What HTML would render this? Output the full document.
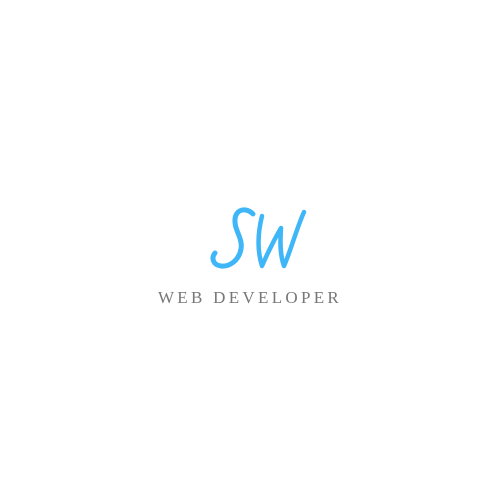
<!DOCTYPE html>
<html><head><style>
html,body{margin:0;padding:0;width:500px;height:500px;background:#fff;overflow:hidden}
.t{position:absolute;left:0;width:500px;top:288px;text-align:center;font-family:"Liberation Serif",serif;font-size:17px;letter-spacing:3.3px;color:#777;padding-left:0px}
</style></head><body>
<svg width="500" height="500" style="position:absolute;left:0;top:0">
<g fill="none" stroke="#3fb6f7" stroke-linecap="round" stroke-linejoin="round">
<path d="M253 214 C246 207 236 209 235 219 C234 230 243 238 241 249 C239 260 230 267 221 266 C213 265 211 258 215 253" stroke-width="5"/>
<path d="M262 216 C258 232 257 250 262 266 C268 252 274 240 281 228 C280 242 280 255 284 266 C291 250 296 230 304 212" stroke-width="4.5"/>
</g>
</svg>
<div class="t">WEB DEVELOPER</div>
</body></html>
